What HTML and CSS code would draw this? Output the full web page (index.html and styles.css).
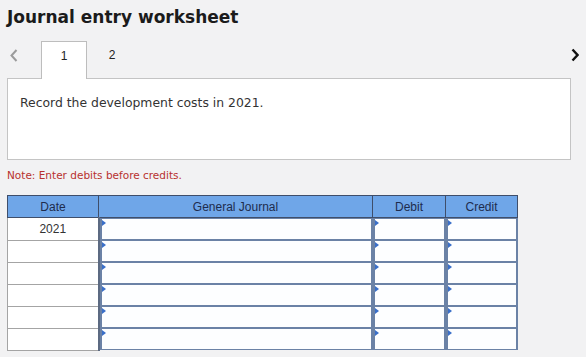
FILE: index.html
```html
<!DOCTYPE html>
<html lang="en">
<head>
    <meta charset="UTF-8">
    <meta name="viewport" content="width=device-width, initial-scale=1.0">
    <title>Journal entry worksheet</title>
    <link rel="stylesheet" href="styles.css">
</head>
<body>
    <div class="wrap">
        <!-- title -->
        <h1 class="title">Journal entry worksheet</h1>

        <!-- tabs -->
        <div class="tabs">
            <span class="arrow prev">
                <svg width="8" height="13" viewBox="0 0 8 13"><polyline points="6.5,1 1.5,6.5 6.5,12" fill="none" stroke="#9b9b9b" stroke-width="2"/></svg>
            </span>
            <div class="tab active">1</div>
            <div class="tab">2</div>
            <span class="arrow next">
                <svg width="8" height="14" viewBox="0 0 8 14"><polyline points="1.5,1.5 6.5,7 1.5,12.5" fill="none" stroke="#111" stroke-width="2.4"/></svg>
            </span>
        </div>

        <!-- question -->
        <div class="question">
            Record the development costs in 2021.
        </div>

        <div class="note">Note: Enter debits before credits.</div>

        <!-- journal table -->
        <table class="journal">
            <thead>
                <tr>
                    <th class="date_col">Date</th>
                    <th class="gj_col">General Journal</th>
                    <th class="num_col">Debit</th>
                    <th class="num_col">Credit</th>
                </tr>
            </thead>
            <tbody>
                <tr>
                    <td class="date_cell">2021</td>
                    <td class="in_cell"><div class="field"></div></td>
                    <td class="in_cell"><div class="field"></div></td>
                    <td class="in_cell"><div class="field"></div></td>
                </tr>
                <tr>
                    <td class="date_cell"></td>
                    <td class="in_cell"><div class="field"></div></td>
                    <td class="in_cell"><div class="field"></div></td>
                    <td class="in_cell"><div class="field"></div></td>
                </tr>
                <tr>
                    <td class="date_cell"></td>
                    <td class="in_cell"><div class="field"></div></td>
                    <td class="in_cell"><div class="field"></div></td>
                    <td class="in_cell"><div class="field"></div></td>
                </tr>
                <tr>
                    <td class="date_cell"></td>
                    <td class="in_cell"><div class="field"></div></td>
                    <td class="in_cell"><div class="field"></div></td>
                    <td class="in_cell"><div class="field"></div></td>
                </tr>
                <tr>
                    <td class="date_cell"></td>
                    <td class="in_cell"><div class="field"></div></td>
                    <td class="in_cell"><div class="field"></div></td>
                    <td class="in_cell"><div class="field"></div></td>
                </tr>
                <tr>
                    <td class="date_cell"></td>
                    <td class="in_cell"><div class="field"></div></td>
                    <td class="in_cell"><div class="field"></div></td>
                    <td class="in_cell"><div class="field"></div></td>
                </tr>
            </tbody>
        </table>
    </div>
</body>
</html>
```

FILE: styles.css
```css
body {
    margin: 0;
    background-color: #f2f2f3;
    font-family: "DejaVu Sans", Verdana, sans-serif;
    color: #222;
}

.wrap {
    padding: 6px 7px 0 7px;
}

.title {
    margin: 0;
    font-size: 17px;
    font-weight: bold;
    color: #1b1b1b;
    line-height: 22px;
}

.tabs {
    display: flex;
    align-items: flex-end;
    height: 38px;
    margin-top: 13px;
}

.arrow {
    align-self: flex-start;
    display: flex;
}

.arrow svg {
    display: block;
}

.prev {
    width: 34px;
    padding: 8px 0 0 3px;
    box-sizing: border-box;
}

.next {
    margin-left: auto;
    padding-top: 7px;
}

.tab {
    width: 46px;
    height: 38px;
    box-sizing: border-box;
    text-align: center;
    font-family: "Liberation Sans", Arial, sans-serif;
    font-size: 12px;
    line-height: 28px;
    color: #222;
}

.tab.active {
    background-color: #fff;
    border: 1px solid #bdbdbd;
    border-bottom: none;
    position: relative;
    z-index: 1;
}

.tab + .tab {
    width: 50px;
}

.question {
    width: 564px;
    height: 82px;
    box-sizing: border-box;
    margin-top: -1px;
    background-color: #fff;
    border: 1px solid #c4c4c4;
    padding: 16px 12px;
    font-size: 12.4px;
    color: #333;
}

.note {
    margin-top: 8px;
    font-size: 10.5px;
    color: #b8312f;
    line-height: 14px;
}

.journal {
    margin-top: 13px;
    border-collapse: collapse;
    width: 506px;
    table-layout: fixed;
    font-family: "Liberation Sans", Arial, sans-serif;
    font-size: 12px;
}

.journal th {
    height: 21px;
    padding: 0;
    background-color: #6fa6e8;
    border: 1px solid #3f4e6a;
    font-weight: normal;
    color: #1e2c4d;
}

.date_col {
    width: 90px;
}

.gj_col {
    width: 273px;
}

.num_col {
    width: 71px;
}

.num_col:nth-child(3) {
    width: 72px;
}

.journal td {
    padding: 0;
    height: 21px;
}

.date_cell {
    background-color: #fff;
    border: 1px solid #a4a4a4;
    border-right: 2px solid #5c6a82;
    text-align: center;
    color: #333;
}

.in_cell {
    border: none;
}

.field {
    position: relative;
    height: 22px;
    box-sizing: border-box;
    background-color: #fdfeff;
    border: 2px solid #6b82a6;
    border-top-width: 1px;
    border-bottom-width: 1px;
}

.field::before {
    content: "";
    position: absolute;
    left: 0;
    top: 1px;
    border-top: 3px solid transparent;
    border-bottom: 3px solid transparent;
    border-left: 4px solid #3a6fc9;
}
```
